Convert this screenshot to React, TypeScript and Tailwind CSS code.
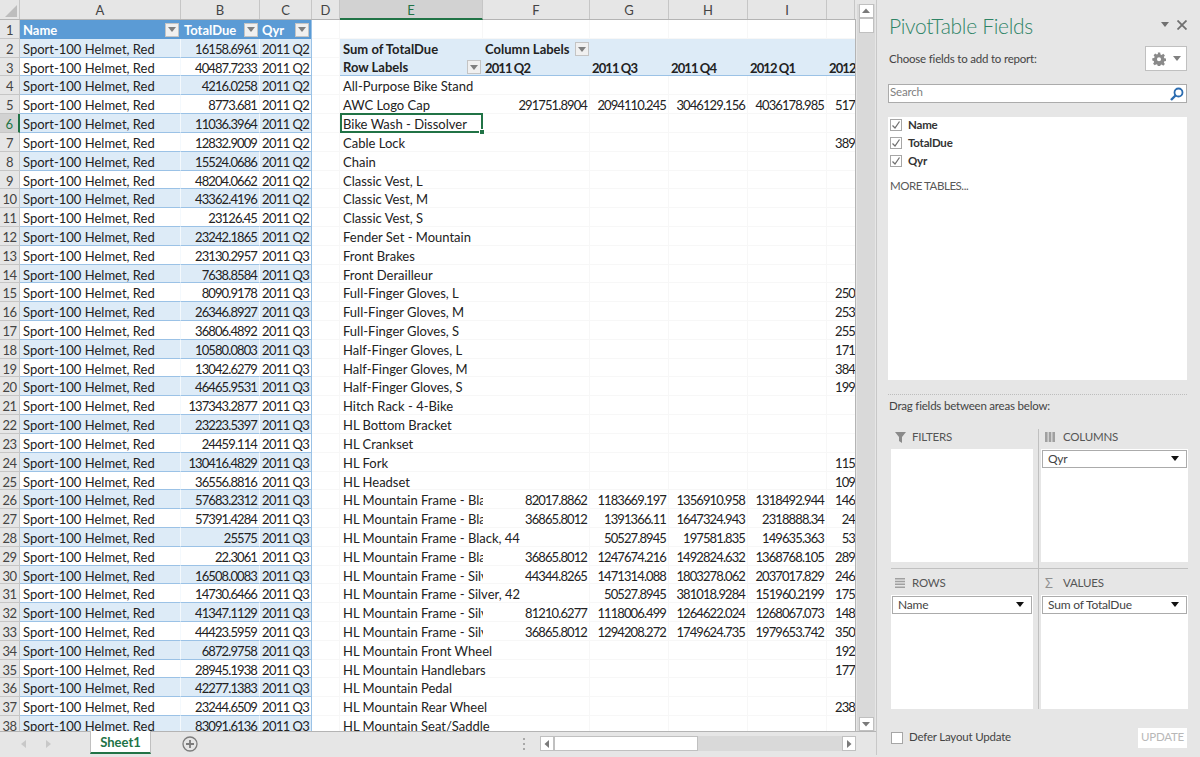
import React from "react";

const nums = ["16158.6961","40487.7233","4216.0258","8773.681","11036.3964","12832.9009","15524.0686","48204.0662","43362.4196","23126.45","23242.1865","23130.2957","7638.8584","8090.9178","26346.8927","36806.4892","10580.0803","13042.6279","46465.9531","137343.2877","23223.5397","24459.114","130416.4829","36556.8816","57683.2312","57391.4284","25575","22.3061","16508.0083","14730.6466","41347.1129","44423.5959","6872.9758","28945.1938","42277.1383","23244.6509","83091.6136"];

type P = [string, string?, string?, string?, string?, string?];
const pivot: P[] = [
  ["All-Purpose Bike Stand"],
  ["AWC Logo Cap","291751.8904","2094110.245","3046129.156","4036178.985","517"],
  ["Bike Wash - Dissolver"],
  ["Cable Lock","","","","","389"],
  ["Chain"],["Classic Vest, L"],["Classic Vest, M"],["Classic Vest, S"],["Fender Set - Mountain"],["Front Brakes"],["Front Derailleur"],
  ["Full-Finger Gloves, L","","","","","250"],
  ["Full-Finger Gloves, M","","","","","253"],
  ["Full-Finger Gloves, S","","","","","255"],
  ["Half-Finger Gloves, L","","","","","171"],
  ["Half-Finger Gloves, M","","","","","384"],
  ["Half-Finger Gloves, S","","","","","199"],
  ["Hitch Rack - 4-Bike"],["HL Bottom Bracket"],["HL Crankset"],
  ["HL Fork","","","","","115"],
  ["HL Headset","","","","","109"],
  ["HL Mountain Frame - Black, 38","82017.8862","1183669.197","1356910.958","1318492.944","146"],
  ["HL Mountain Frame - Black, 42","36865.8012","1391366.11","1647324.943","2318888.34","24"],
  ["HL Mountain Frame - Black, 44","","50527.8945","197581.835","149635.363","53"],
  ["HL Mountain Frame - Black, 48","36865.8012","1247674.216","1492824.632","1368768.105","289"],
  ["HL Mountain Frame - Silver, 38","44344.8265","1471314.088","1803278.062","2037017.829","246"],
  ["HL Mountain Frame - Silver, 42","","50527.8945","381018.9284","151960.2199","175"],
  ["HL Mountain Frame - Silver, 44","81210.6277","1118006.499","1264622.024","1268067.073","148"],
  ["HL Mountain Frame - Silver, 46","36865.8012","1294208.272","1749624.735","1979653.742","350"],
  ["HL Mountain Front Wheel","","","","","192"],
  ["HL Mountain Handlebars","","","","","177"],
  ["HL Mountain Pedal"],
  ["HL Mountain Rear Wheel","","","","","238"],
  ["HL Mountain Seat/Saddle"],
];

const cols: [string, string][] = [["A","w-[161px]"],["B","w-[79px]"],["C","w-[52px]"],["D","w-[28px]"],["E","w-[143px]"],["F","w-[107px]"],["G","w-[79px]"],["H","w-[79px]"],["I","w-[79px]"],["","w-[28px]"]];

const Tri = ({ c = "#7f7f7f" }: { c?: string }) => (
  <svg width="8" height="5" viewBox="0 0 8 5"><path d="M0 0h8L4 5z" fill={c} /></svg>
);

const FilterBtn = () => (
  <span className="flex h-[14px] w-[14px] shrink-0 items-center justify-center border border-[#c4c4c4] bg-[#f0f0f0]"><Tri /></span>
);

const RowHead = ({ n, active }: { n: number; active?: boolean }) => (
  <div className={active
    ? "h-full w-[20px] shrink-0 border-r-2 border-b border-r-[#217346] border-b-[#c6c6c6] bg-[#d2d2d2] text-center tracking-[-0.6px] text-[#217346]"
    : "h-full w-[20px] shrink-0 border-r border-b border-[#c6c6c6] bg-[#e6e6e6] text-center tracking-[-0.6px] text-[#444444]"}>{n}</div>
);

const plain = "h-full shrink-0 overflow-hidden whitespace-nowrap border-r border-b border-[#f7f7f7] bg-white";
const num = "h-full shrink-0 overflow-hidden whitespace-nowrap border-r border-b border-[#f7f7f7] bg-white pr-[2px] text-right tracking-[-0.9px]";

function TableCells({ i }: { i: number }) {
  const blue = i % 2 === 0;
  const bg = blue ? "bg-[#ddebf7]" : "bg-white";
  return (
    <>
      <div className={`h-full w-[161px] shrink-0 overflow-hidden whitespace-nowrap border-r border-b border-r-[#f4f9fd] border-b-[#9bc2e6] pl-[3px] ${bg}`}>Sport-100 Helmet, Red</div>
      <div className={`h-full w-[79px] shrink-0 overflow-hidden whitespace-nowrap border-r border-b border-r-[#f4f9fd] border-b-[#9bc2e6] pr-[2px] text-right tracking-[-0.9px] ${bg}`}>{nums[i]}</div>
      <div className={`h-full w-[52px] shrink-0 overflow-hidden whitespace-nowrap border-r border-b border-r-[#9bc2e6] border-b-[#9bc2e6] pl-[2px] tracking-[-0.6px] ${bg}`}>{i < 11 ? "2011 Q2" : "2011 Q3"}</div>
      <div className={`${plain} w-[28px]`} />
    </>
  );
}

function PivotRow({ p }: { p: P }) {
  const clip = !!p[1];
  return (
    <>
      <div className={`relative z-10 h-full w-[143px] shrink-0 whitespace-nowrap border-b border-[#f7f7f7] bg-white pl-[3px] ${clip ? "overflow-hidden" : ""}`}>{p[0]}</div>
      <div className={`${num} w-[107px]`}>{p[1]}</div>
      <div className={`${num} w-[79px]`}>{p[2]}</div>
      <div className={`${num} w-[79px]`}>{p[3]}</div>
      <div className={`${num} w-[79px]`}>{p[4]}</div>
      <div className="h-full w-[28px] shrink-0 overflow-hidden whitespace-nowrap border-b border-[#f7f7f7] bg-white text-right tracking-[-0.9px]">{p[5]}</div>
    </>
  );
}

function Sheet() {
  return (
    <div className="h-[711px] w-[856px] shrink-0 overflow-hidden border-r border-[#b4b4b4] text-[13px] leading-[20px] text-[#222222]">
      {/* row 1 */}
      <div className="flex h-[18.82px]">
        <RowHead n={1} />
        <div className="flex h-full w-[161px] shrink-0 items-center justify-between bg-[#5b9bd5] pt-[1px] pr-[2px] pl-[3px] font-bold text-white">Name<FilterBtn /></div>
        <div className="flex h-full w-[79px] shrink-0 items-center justify-between bg-[#5b9bd5] pt-[1px] pr-[2px] pl-[3px] font-bold text-white">TotalDue<FilterBtn /></div>
        <div className="flex h-full w-[52px] shrink-0 items-center justify-between border-r border-[#9bc2e6] bg-[#5b9bd5] pt-[1px] pr-[2px] pl-[2px] font-bold text-white">Qyr<FilterBtn /></div>
        <div className={`${plain} w-[28px]`} />
        <div className={`${plain} w-[143px]`} />
        <div className={`${plain} w-[107px]`} />
        <div className={`${plain} w-[79px]`} />
        <div className={`${plain} w-[79px]`} />
        <div className={`${plain} w-[79px]`} />
        <div className="h-full w-[28px] shrink-0 border-b border-[#f7f7f7] bg-white" />
      </div>
      {/* row 2 */}
      <div className="flex h-[18.82px]">
        <RowHead n={2} />
        <TableCells i={0} />
        <div className="flex h-full w-[515px] shrink-0 bg-[#ddebf7] font-bold">
          <div className="w-[143px] shrink-0 pl-[3px]">Sum of TotalDue</div>
          <div className="flex w-[107px] shrink-0 items-center justify-between pt-[2px] pr-[1px] pl-[2px]">Column Labels<FilterBtn /></div>
        </div>
      </div>
      {/* row 3 */}
      <div className="flex h-[18.82px]">
        <RowHead n={3} />
        <TableCells i={1} />
        <div className="flex h-full w-[515px] shrink-0 overflow-hidden border-b border-[#9bc2e6] bg-[#ddebf7] font-bold whitespace-nowrap">
          <div className="flex w-[143px] shrink-0 items-center justify-between pt-[1px] pr-[2px] pl-[3px]">Row Labels<FilterBtn /></div>
          <div className="w-[107px] shrink-0 pl-[2px] tracking-[-0.9px]">2011 Q2</div>
          <div className="w-[79px] shrink-0 pl-[2px] tracking-[-0.9px]">2011 Q3</div>
          <div className="w-[79px] shrink-0 pl-[2px] tracking-[-0.9px]">2011 Q4</div>
          <div className="w-[79px] shrink-0 pl-[2px] tracking-[-0.9px]">2012 Q1</div>
          <div className="w-[28px] shrink-0 overflow-hidden pl-[2px] tracking-[-0.9px]">2012 Q2</div>
        </div>
      </div>
      {pivot.map((p, k) => {
        const n = k + 4;
        return (
          <div key={n} className="relative flex h-[18.82px]">
            <RowHead n={n} active={n === 6} />
            <TableCells i={n - 2} />
            <PivotRow p={p} />
            {n === 6 && (
              <div className="absolute top-[-1px] left-[340px] z-20 h-[20px] w-[143px] border-2 border-[#217346]">
                <span className="absolute right-[-4px] bottom-[-4px] h-[6px] w-[6px] border border-white bg-[#217346]" />
              </div>
            )}
          </div>
        );
      })}
    </div>
  );
}

function ColHeaders() {
  return (
    <div className="flex h-[20px] w-[856px] shrink-0 border-b border-[#b4b4b4] bg-[#e6e6e6] text-[13px] leading-[20px] text-[#444444]">
      <div className="flex w-[20px] shrink-0 items-end justify-end border-r border-[#c6c6c6] p-[2px]">
        <svg width="12" height="12" viewBox="0 0 12 12"><path d="M12 0v12H0z" fill="#bdbdbd" /></svg>
      </div>
      {cols.map(([l, w], i) => (
        <div key={i} className={l === "E"
          ? `${w} -mb-px shrink-0 border-r border-b-2 border-r-[#c6c6c6] border-b-[#217346] bg-[#d2d2d2] text-center text-[#217346]`
          : `${w} shrink-0 border-r border-[#c6c6c6] text-center`}>{l}</div>
      ))}
    </div>
  );
}

const ArrowBox = ({ d, cls }: { d: string; cls: string }) => (
  <div className={`flex shrink-0 items-center justify-center border border-[#c0c0c0] bg-white ${cls}`}>
    <svg width="8" height="8" viewBox="0 0 8 8"><path d={d} fill="#7a7a7a" /></svg>
  </div>
);

function VScroll() {
  return (
    <div className="flex h-[731px] w-[18px] shrink-0 flex-col pt-[4px]">
      <div className="flex h-full w-[18px] flex-col items-center bg-[#d9d9d9]">
        <ArrowBox d="M4 1.5 8 6H0z" cls="h-[14px] w-[15px]" />
        <div className="h-[15px] w-[15px] border border-[#c0c0c0] bg-white" />
        <div className="flex-1" />
        <ArrowBox d="M0 2h8L4 6.5z" cls="h-[14px] w-[15px]" />
      </div>
    </div>
  );
}

function BottomBar() {
  return (
    <div className="flex h-[26px] items-start border-t border-[#b4b4b4] bg-[#e6e6e6]">
      <div className="flex h-[24px] w-[90px] shrink-0 items-center gap-[20px] pl-[21px]">
        <svg width="5" height="8" viewBox="0 0 5 8"><path d="M5 0v8L0 4z" fill="#c8c8c8" /></svg>
        <svg width="5" height="8" viewBox="0 0 5 8"><path d="M0 0v8l5-4z" fill="#c8c8c8" /></svg>
      </div>
      <div className="-mt-px h-[23px] w-[61px] shrink-0 border-x border-b-2 border-x-[#c0c0c0] border-b-[#217346] bg-white text-center text-[13px] leading-[22px] font-bold text-[#217346]">Sheet1</div>
      <div className="flex h-[24px] w-[78px] shrink-0 items-center pl-[31px]">
        <svg width="16" height="16" viewBox="0 0 16 16" fill="none" stroke="#7c7c7c"><circle cx="8" cy="8" r="7" strokeWidth="1.3" /><path d="M8 4v8M4 8h8" strokeWidth="1.8" /></svg>
      </div>
      <div className="flex h-[24px] w-[311px] shrink-0 items-center justify-end pr-[14px]">
        <svg width="3" height="12" viewBox="0 0 3 12"><path d="M0 0h2v2H0zM0 5h2v2H0zM0 10h2v2H0z" fill="#a8a8a8" /></svg>
      </div>
      <div className="mt-[4px] flex h-[15px] w-[316px] shrink-0 bg-[#d9d9d9]">
        <ArrowBox d="M6 0v8L1.5 4z" cls="h-[15px] w-[14px]" />
        <div className="h-[15px] w-[144px] border border-[#c0c0c0] bg-white" />
        <div className="flex-1" />
        <ArrowBox d="M2 0v8l4.5-4z" cls="h-[15px] w-[14px]" />
      </div>
    </div>
  );
}

const Check = ({ on = true }: { on?: boolean }) => (
  <span className="flex h-[12px] w-[12px] shrink-0 items-center justify-center border border-[#a6a6a6] bg-white">
    {on && <svg width="10" height="10" viewBox="0 0 10 10" fill="none" stroke="#707070" strokeWidth="1.3"><path d="M1.5 5.5 4 8l4.5-6.5" /></svg>}
  </span>
);

const Chip = ({ t }: { t: string }) => (
  <div className="flex h-[18px] items-center justify-between border border-[#ababab] bg-white pr-[7px] pb-[1px] pl-[5px] text-[12px] text-[#444444]">{t}<Tri c="#111111" /></div>
);

const AreaHead = ({ icon, t, w }: { icon: React.ReactNode; t: string; w: string }) => (
  <div className="flex h-[18px] items-center pb-[2px] text-[#555555]">
    <span className={`flex shrink-0 justify-start pl-[4px] ${w}`}>{icon}</span>{t}
  </div>
);

function Panel() {
  return (
    <div className="flex h-[755px] w-[324px] shrink-0 flex-col border-l border-[#c8c8c8] bg-[#e6e6e6] pr-[13px] pl-[11px] text-[11.5px] tracking-[-0.2px] text-[#444444]">
      <div className="flex h-[46px] shrink-0 items-center justify-between pt-[5px] pl-[1px]">
        <span className="text-[21px] font-light tracking-[-0.3px] text-[#2f8466]">PivotTable Fields</span>
        <span className="-mt-[2px] flex items-center gap-[8px]">
          <Tri c="#707070" />
          <svg width="10" height="10" viewBox="0 0 10 10" fill="none" stroke="#707070" strokeWidth="1.8"><path d="M.5.5l9 9M9.5.5l-9 9" /></svg>
        </span>
      </div>
      <div className="flex h-[25px] shrink-0 items-center justify-between pl-[1px]">
        <span>Choose fields to add to report:</span>
        <span className="flex h-[25px] w-[42px] items-center justify-center gap-[7px] border border-[#c0c0c0] bg-white">
          <svg width="14" height="14" viewBox="0 0 24 24" fill="#8a8a8a"><path d="M10 1h4l.6 3.2 2 .8 2.7-1.8 2.8 2.8-1.8 2.7.8 2 3.2.6v4l-3.2.6-.8 2 1.8 2.7-2.8 2.8-2.7-1.8-2 .8L14 25h-4l-.6-3.200-2-.8-2.7 1.800-2.800-2.800 1.800-2.700-.8-2L.5 14.700v-4l3.200-.6.8-2L2.700 5.400l2.800-2.800 2.700 1.800 2-.8zM12 9a3.500 3.500 0 1 0 0 7 3.500 3.500 0 0 0 0-7z" fillRule="evenodd" /></svg>
          <Tri c="#808080" />
        </span>
      </div>
      <div className="mt-[13px] flex h-[19px] shrink-0 items-center justify-between border border-[#ababab] bg-white pr-[2px] pl-[1px] text-[#808080]">
        <span className="-mt-[3px]">Search</span>
        <svg width="14" height="14" viewBox="0 0 14 14" fill="none" stroke="#2b6cb0" strokeWidth="1.8"><circle cx="8.500" cy="5.500" r="4" /><path d="M5.500 8.500 1 13" strokeWidth="2.400" /></svg>
      </div>
      <div className="mt-[14px] flex h-[263px] shrink-0 flex-col bg-white text-[#333333]">
        <div className="-mt-[1px]">
          {["Name","TotalDue","Qyr"].map((t) => (
            <div key={t} className="flex h-[18px] items-center gap-[6px] pl-[2px] font-bold"><Check />{t}</div>
          ))}
        </div>
        <div className="mt-[7px] pl-[2px] tracking-[-0.45px] text-[#595959]">MORE TABLES...</div>
      </div>
      <div className="mt-[14px] h-0 shrink-0 border-t border-dotted border-[#bdbdbd]" />
      <div className="mt-[2px] h-[18px] shrink-0 pl-[1px] leading-[18px]">Drag fields between areas below:</div>
      <div className="mt-[14px] -mr-[1px] grid h-[280px] shrink-0 grid-cols-[148px_1fr] grid-rows-[140px_1fr] pl-[3px]">
        <div className="flex flex-col border-r border-b border-[#c0c0c0] pr-[5px] pb-[6px]">
          <AreaHead t="FILTERS" w="w-[21px]" icon={<svg width="11" height="11" viewBox="0 0 11 11"><path d="M0 0h11L7 5v6L4 9V5z" fill="#8a8a8a" /></svg>} />
          <div className="mt-[2px] flex-1 bg-white" />
        </div>
        <div className="flex flex-col border-b border-[#c0c0c0] pb-[6px] pl-[2px]">
          <AreaHead t="COLUMNS" w="w-[22px]" icon={<svg width="10" height="10" viewBox="0 0 10 10"><path d="M0 0h2.600v10H0zM3.700 0h2.600v10H3.700zM7.400 0H10v10H7.400z" fill="#a0a0a0" /></svg>} />
          <div className="mt-[2px] flex-1 bg-white p-px"><Chip t="Qyr" /></div>
        </div>
        <div className="flex flex-col border-r border-[#c0c0c0] pt-[6px] pr-[5px]">
          <AreaHead t="ROWS" w="w-[21px]" icon={<svg width="10" height="10" viewBox="0 0 10 10"><path d="M0 0h10v1.500H0zM0 2.800h10v1.500H0zM0 5.600h10v1.500H0zM0 8.400h10v1.500H0z" fill="#a0a0a0" /></svg>} />
          <div className="mt-[2px] flex-1 bg-white p-px"><Chip t="Name" /></div>
        </div>
        <div className="flex flex-col pt-[6px] pl-[2px]">
          <AreaHead t="VALUES" w="w-[22px]" icon={<span className="text-[13px] leading-[12px] text-[#909090]">Σ</span>} />
          <div className="mt-[2px] flex-1 bg-white p-px"><Chip t="Sum of TotalDue" /></div>
        </div>
      </div>
      <div className="mt-[19px] flex h-[20px] shrink-0 items-center justify-between pl-[3px]">
        <span className="flex items-center gap-[6px]"><Check on={false} /><span className="-mt-[2px]">Defer Layout Update</span></span>
        <span className="flex h-[20px] w-[49px] items-center justify-center bg-white pb-[2px] text-[#b8b8b8]">UPDATE</span>
      </div>
    </div>
  );
}

export default function App() {
  return (
    <div className="flex h-[757px] w-[1200px] overflow-hidden bg-[#e6e6e6] font-['Lato',sans-serif]">
      <div className="flex w-[876px] shrink-0 flex-col">
        <div className="flex h-[731px] shrink-0">
          <div className="flex w-[856px] shrink-0 flex-col">
            <ColHeaders />
            <Sheet />
          </div>
          <div className="w-[1px] shrink-0" />
          <VScroll />
        </div>
        <BottomBar />
      </div>
      <Panel />
    </div>
  );
}
